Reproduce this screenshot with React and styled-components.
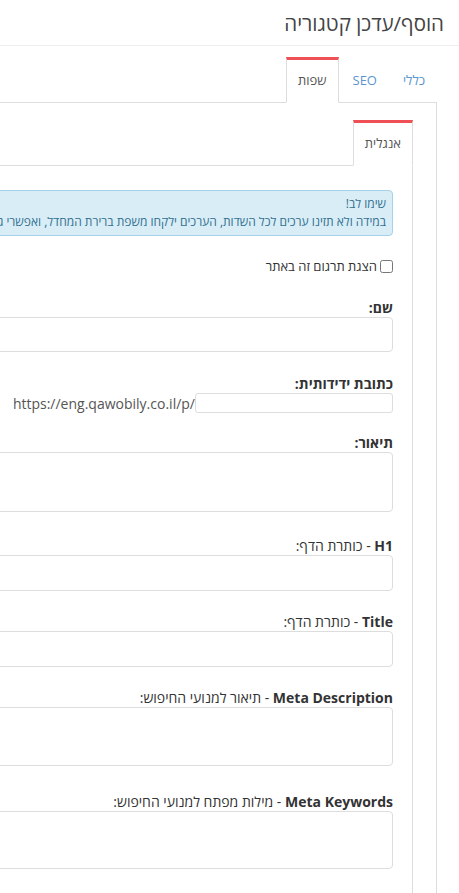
import React from "react";
import styled, { createGlobalStyle } from "styled-components";

const Global = createGlobalStyle`
  html, body { margin: 0; padding: 0; background: #fff; }
  body { font-family: "Open Sans", "Liberation Sans", sans-serif; color: #333; overflow: hidden; }
  * { box-sizing: border-box; }
`;

const Root = styled.div`
  direction: rtl;
  width: 100%;
  height: 893px;
  overflow: hidden;
`;

const Page = styled.div`
  width: 1100px;
`;

const Header = styled.div`
  height: 46px;
  padding: 9px 15px 0;
  border-bottom: 1px solid #eee;
`;

const Title = styled.h1`
  margin: 0;
  font-size: 20.5px;
  line-height: 28px;
  font-weight: 400;
  color: #444;
`;

const Content = styled.div`
  margin: 11px 22px 0 0;
`;

const TabNav = styled.div`
  display: flex;
  gap: 2px;
  border-bottom: 1px solid #ddd;
`;

const Tab = styled.div`
  height: 46px;
  margin-bottom: -1px;
  padding: 10px 11px 12px;
  font-size: 13px;
  line-height: 20px;
  border: 1px solid ${(p) => (p.$active ? "#ddd" : "transparent")};
  border-top: 3px solid ${(p) => (p.$active ? "#ef5055" : "transparent")};
  border-bottom-color: ${(p) => (p.$active ? "#fff" : "transparent")};
  background: ${(p) => (p.$active ? "#fff" : "transparent")};
  color: ${(p) => (p.$active ? "#555" : "#5b95d0")};
`;

const Pane = styled.div`
  border-right: 1px solid #ddd;
  border-left: 1px solid #ddd;
  padding: ${(p) => p.$pad};
  min-height: 900px;
`;

const Alert = styled.div`
  background: #d9edf7;
  border: 1px solid #a5d2ea;
  border-radius: 4px;
  color: #31708f;
  font-size: 12px;
  line-height: 18px;
  padding: 4px 6px 4px;
  white-space: nowrap;
  margin-bottom: 21px;
`;

const CheckRow = styled.label`
  display: flex;
  align-items: center;
  gap: 3px;
  font-size: 13px;
  line-height: 18px;
  color: #333;
  margin-bottom: 24px;
`;

const Check = styled.input`
  margin: 0;
  width: 13px;
  height: 13px;
`;

const Group = styled.div`
  margin-bottom: ${(p) => p.$gap}px;
`;

const Label = styled.div`
  font-size: 14px;
  line-height: 18px;
  color: #333;
  font-weight: ${(p) => (p.$bold ? 700 : 400)};
`;

const Strong = styled.span`
  font-weight: 700;
`;

const Field = styled.div`
  height: ${(p) => p.$h}px;
  border: 1px solid #ddd;
  border-radius: 4px;
  background: #fff;
`;

const UrlRow = styled.div`
  display: flex;
  align-items: center;
`;

const UrlInput = styled.div`
  width: 198px;
  height: 20px;
  border: 1px solid #ddd;
  border-radius: 3px;
`;

const UrlPrefix = styled.span`
  direction: ltr;
  font-size: 14px;
  color: #555;
`;

export default function App() {
  return (
    <Root>
      <Global />
      <Page>
        <Header>
          <Title>הוסף/עדכן קטגוריה</Title>
        </Header>
        <Content>
          <TabNav>
            <Tab>כללי</Tab>
            <Tab>SEO</Tab>
            <Tab $active>שפות</Tab>
          </TabNav>
          <Pane $pad="17px 23px 0 0">
            <TabNav>
              <Tab $active>אנגלית</Tab>
            </TabNav>
            <Pane $pad="24px 19px 0 0">
              <Alert>
                <div>שימו לב!</div>
                <div>במידה ולא תזינו ערכים לכל השדות, הערכים ילקחו משפת ברירת המחדל, ואפשרי גם שהדף יוצג בצורה לא תקינה</div>
              </Alert>
              <CheckRow>
                <Check type="checkbox" />
                הצגת תרגום זה באתר
              </CheckRow>
              <Group $gap={23}>
                <Label $bold>שם:</Label>
                <Field $h={35} />
              </Group>
              <Group $gap={21}>
                <Label $bold>כתובת ידידותית:</Label>
                <UrlRow>
                  <UrlInput />
                  <UrlPrefix>https://eng.qawobily.co.il/p/</UrlPrefix>
                </UrlRow>
              </Group>
              <Group $gap={25}>
                <Label $bold>תיאור:</Label>
                <Field $h={60} />
              </Group>
              <Group $gap={22}>
                <Label>
                  <Strong>H1</Strong> - כותרת הדף:
                </Label>
                <Field $h={36} />
              </Group>
              <Group $gap={22}>
                <Label>
                  <Strong>Title</Strong> - כותרת הדף:
                </Label>
                <Field $h={36} />
              </Group>
              <Group $gap={27}>
                <Label>
                  <Strong>Meta Description</Strong> - תיאור למנועי החיפוש:
                </Label>
                <Field $h={59} />
              </Group>
              <Group $gap={22}>
                <Label>
                  <Strong>Meta Keywords</Strong> - מילות מפתח למנועי החיפוש:
                </Label>
                <Field $h={58} />
              </Group>
            </Pane>
          </Pane>
        </Content>
      </Page>
    </Root>
  );
}
